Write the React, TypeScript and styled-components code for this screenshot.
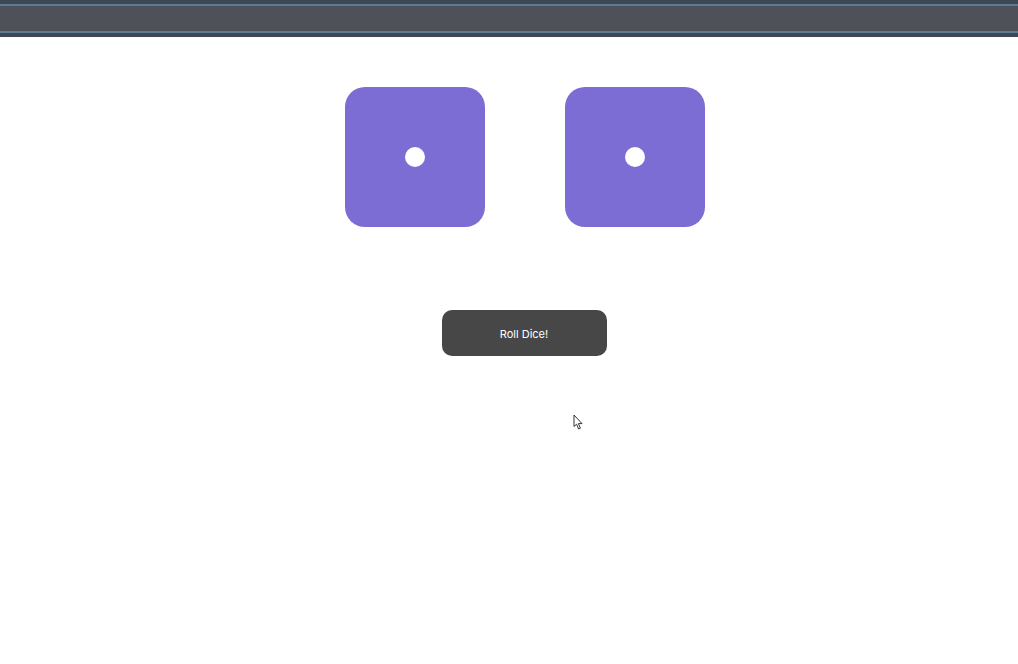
import React from "react";
import styled, { createGlobalStyle } from "styled-components";

const GlobalStyle = createGlobalStyle`
  html, body {
    margin: 0;
    padding: 0;
    background: #ffffff;
    font-family: Inter, "Liberation Sans", sans-serif;
  }
`;

const TopBar = styled.div`
  height: 37px;
  box-sizing: border-box;
  background: #4e5258;
  border-top: 4px solid #3e4752;
  border-bottom: 4px solid #3e4752;
  box-shadow: inset 0 2px 0 #5b7b97, inset 0 -2px 0 #5b7b97;
`;

const Stage = styled.main`
  position: relative;
  display: flex;
  flex-direction: column;
  align-items: center;
  padding: 50px 0 0 32px;
  min-height: 500px;
`;

const DiceRow = styled.div`
  display: flex;
  gap: 80px;
`;

const Die = styled.div`
  width: 140px;
  height: 140px;
  border-radius: 20px;
  background: #7b6dd4;
  display: flex;
  align-items: center;
  justify-content: center;
`;

const Pip = styled.span`
  width: 20px;
  height: 20px;
  border-radius: 50%;
  background: #ffffff;
`;

const RollButton = styled.button`
  margin: 83px 2px 0 0;
  width: 165px;
  height: 46px;
  padding: 2px 0 0;
  border: none;
  border-radius: 10px;
  background: #474747;
  color: #ffffff;
  font-family: Inter, "Liberation Sans", sans-serif;
  font-size: 11px;
  cursor: pointer;
`;

const Cursor = styled.svg`
  position: absolute;
  left: 573px;
  top: 377px;
  z-index: 2;
`;

const App: React.FC = () => {
  const dice = [1, 1];
  return (
    <>
      <GlobalStyle />
      <TopBar />
      <Stage>
        <DiceRow>
          {dice.map((_, i) => (
            <Die key={i}>
              <Pip />
            </Die>
          ))}
        </DiceRow>
        <RollButton>Roll Dice!</RollButton>
        <Cursor width="11" height="17" viewBox="0 0 11 17">
          <path
            d="M1 1 L1 12.5 L3.6 10.2 L5.6 15 L7.4 14.2 L5.4 9.6 L9 9.6 Z"
            fill="#ffffff"
            stroke="#333333"
            strokeWidth="1"
            strokeLinejoin="round"
          />
        </Cursor>
      </Stage>
    </>
  );
};

export default App;
